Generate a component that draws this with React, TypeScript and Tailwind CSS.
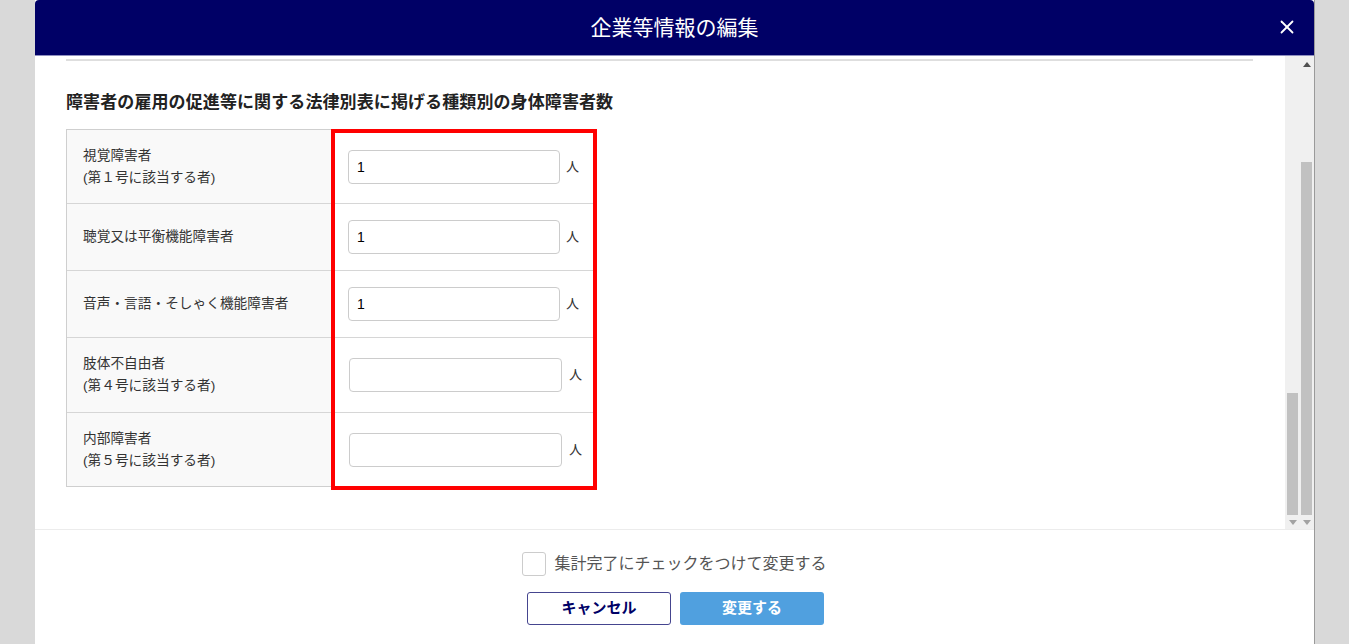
const FONT = "font-['Liberation_Sans','Noto_Sans_CJK_JP',sans-serif]";

interface Row {
  id: number;
  label: string[];
  value: string;
  height: string;
  shift: boolean;
}

// Table rows (label lines, current value)
const rows: Row[] = [
  { id: 1, label: ["視覚障害者", "(第１号に該当する者)"], value: "1", height: "h-[74px]", shift: false },
  { id: 2, label: ["聴覚又は平衡機能障害者"], value: "1", height: "h-[67px]", shift: false },
  { id: 3, label: ["音声・言語・そしゃく機能障害者"], value: "1", height: "h-[67px]", shift: false },
  { id: 4, label: ["肢体不自由者", "(第４号に該当する者)"], value: "", height: "h-[75px]", shift: true },
  { id: 5, label: ["内部障害者", "(第５号に該当する者)"], value: "", height: "h-[73px]", shift: true },
];

const ScrollBars = () => (
  <div className="relative w-[29px] shrink-0 bg-[#f0f0f0]">
    {/* up arrow */}
    <div className="absolute left-[18px] top-[6px] h-0 w-0 border-x-[4px] border-b-[5px] border-x-transparent border-b-[#505050]" />
    {/* thumbs */}
    <div className="absolute left-[16px] top-[106px] h-[353px] w-[11px] bg-[#c1c1c1]" />
    <div className="absolute left-[2px] top-[337px] h-[122px] w-[11px] bg-[#c1c1c1]" />
    {/* down arrows */}
    <div className="absolute left-[4px] top-[464px] h-0 w-0 border-x-[4px] border-t-[5px] border-x-transparent border-t-[#a3a3a3]" />
    <div className="absolute left-[18px] top-[464px] h-0 w-0 border-x-[4px] border-t-[5px] border-x-transparent border-t-[#a3a3a3]" />
  </div>
);

export default function App() {
  return (
    <div className={`flex h-[644px] w-[1349px] overflow-hidden bg-[#d9d9d9] ${FONT}`}>
      <div className="ml-[35px] flex h-[644px] w-[1280px] shrink-0 flex-col border-r border-[#9a9a9a] bg-white">
        {/* Header */}
        <div className="relative flex h-[56px] shrink-0 items-center justify-center rounded-t-[4px] border-b border-[#8f8fc0] bg-[#000066]">
          <h1 className="text-[21px] leading-none text-white">企業等情報の編集</h1>
          <button className="absolute right-[20px] top-[20px] text-white">
            <svg width="14" height="14" viewBox="0 0 14 14" stroke="currentColor" strokeWidth="1.8" strokeLinecap="round">
              <line x1="1.5" y1="1.5" x2="12.5" y2="12.5" />
              <line x1="12.5" y1="1.5" x2="1.5" y2="12.5" />
            </svg>
          </button>
        </div>

        {/* Body */}
        <div className="flex h-[474px] shrink-0 border-b border-[#ececec]">
          <div className="flex-1 pl-[31px] pr-[32px] pt-[3px]">
            <div className="h-[2px] bg-[#dedede]" />
            <h2 className="mt-[30px] text-[17px] font-bold leading-[24px] tracking-[0.1px] text-[#222]">
              障害者の雇用の促進等に関する法律別表に掲げる種類別の身体障害者数
            </h2>

            <div className="relative mt-[14px] w-[531px]">
              <div className="border border-[#cfcfcf]">
                {rows.map((row, index) => (
                  <div
                    key={row.id}
                    className={`flex ${row.height} ${index < rows.length - 1 ? "border-b border-[#d6d6d6]" : ""}`}>
                    <div className="flex w-[267px] shrink-0 flex-col justify-center border-r border-[#d6d6d6] bg-[#f9f9f9] px-[16px] text-[13.7px] leading-[22px] text-[#333]">
                      {row.label.map((line) => (
                        <span key={line}>{line}</span>
                      ))}
                    </div>
                    <div className={`flex flex-1 items-center ${row.shift ? "pl-[15px]" : "pl-[14px]"}`}>
                      <input
                        readOnly
                        value={row.value}
                        className={`h-[34px] ${row.shift ? "w-[213px]" : "w-[212px]"} rounded-[4px] border border-[#cccccc] bg-white px-[8px] text-[14px] text-black outline-none`}
                      />
                      <span className={`${row.shift ? "ml-[7px]" : "ml-[6px]"} text-[13px] text-[#333]`}>人</span>
                    </div>
                  </div>
                ))}
              </div>
              {/* highlight frame */}
              <div className="pointer-events-none absolute left-[265px] top-0 h-[361px] w-[266px] border-[4px] border-[#ff0000]" />
            </div>
          </div>
          <ScrollBars />
        </div>

        {/* Footer */}
        <div className="flex flex-col items-center pt-[22px]">
          <label className="flex items-center gap-[8px]">
            <span className="h-[24px] w-[24px] rounded-[3px] border border-[#cccccc] bg-white" />
            <span className="text-[16px] leading-none text-[#555]">集計完了にチェックをつけて変更する</span>
          </label>
          <div className="ml-[2px] mt-[16px] flex gap-[9px]">
            <button className="flex h-[33px] w-[144px] items-center justify-center rounded-[3px] border border-[#45458f] bg-white text-[15px] font-bold text-[#000066]">
              キャンセル
            </button>
            <button className="flex h-[33px] w-[144px] items-center justify-center rounded-[3px] bg-[#50a0df] text-[15px] font-bold text-white">
              変更する
            </button>
          </div>
        </div>
      </div>
    </div>
  );
}
